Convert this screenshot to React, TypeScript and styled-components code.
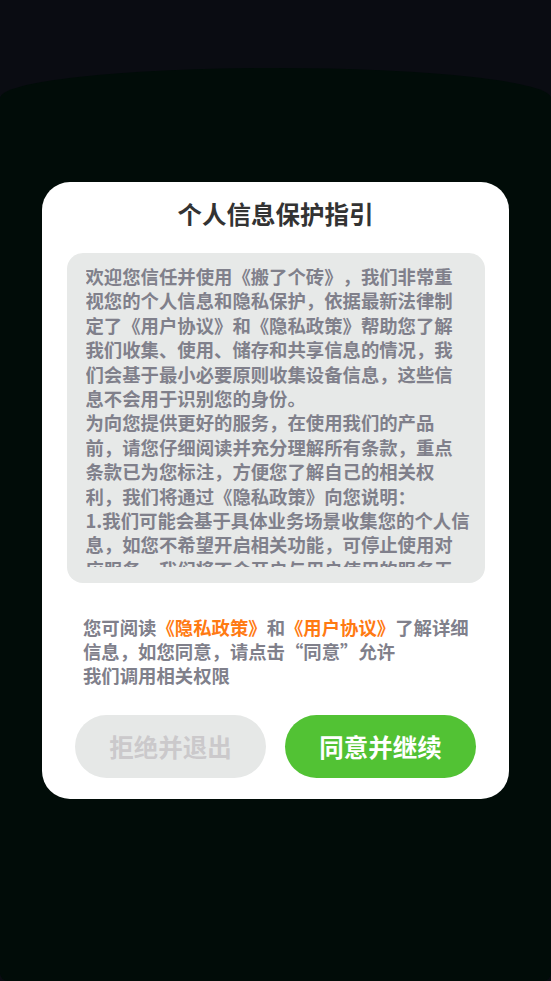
import React from 'react'
import styled, { createGlobalStyle } from 'styled-components'

const GlobalStyle = createGlobalStyle`
  html, body {
    margin: 0;
    padding: 0;
    background: #0a0c12;
  }
  body {
    font-family: 'Noto Sans CJK SC', 'Noto Sans', sans-serif;
    text-spacing-trim: space-all;
  }
  * {
    box-sizing: border-box;
  }
`

const Screen = styled.div`
  height: 100vh;
  display: flex;
  flex-direction: column;
  background: #0a0c12;
  overflow: hidden;
`

const Sheet = styled.div`
  flex: 1;
  margin-top: 68px;
  padding-top: 114px;
  background: #010c08;
  border-radius: 50% 50% 8px 8px / 30px 30px 8px 8px;
`

const Dialog = styled.div`
  width: 467px;
  margin: 0 auto;
  padding: 16px 0 21px;
  background: #ffffff;
  border-radius: 28px;
  display: flex;
  flex-direction: column;
  align-items: center;
`

const Title = styled.h2`
  margin: 0;
  font-size: 24.5px;
  line-height: 32px;
  font-weight: 700;
  color: #333333;
`

const AgreementBox = styled.div`
  width: 418px;
  margin-top: 23px;
  padding: 11px 0 16px 19px;
  background: #e7e9e8;
  border-radius: 16px;
`

const AgreementScroll = styled.div`
  width: 384px;
  height: 303px;
  overflow-y: auto;
  scrollbar-width: none;

  &::-webkit-scrollbar {
    display: none;
  }
`

const Paragraph = styled.p`
  margin: 0;
  font-size: 18.37px;
  line-height: 24.4px;
  font-weight: 700;
  color: #80808b;
`

const Notice = styled.p`
  align-self: stretch;
  margin: 32px 0 0;
  padding: 0 34px 0 41px;
  font-size: 18.37px;
  line-height: 24px;
  font-weight: 700;
  color: #80808b;
`

const Link = styled.span`
  color: #ff7a12;
`

const Actions = styled.div`
  display: flex;
  gap: 19px;
  margin-top: 28px;
`

const ActionButton = styled.button<{ $primary?: boolean }>`
  width: 191px;
  height: 63px;
  border: none;
  border-radius: 32px;
  font-family: inherit;
  font-size: 24.5px;
  font-weight: 700;
  cursor: pointer;
  background: ${({ $primary }) => ($primary ? '#52c234' : '#e6e8e7')};
  color: ${({ $primary }) => ($primary ? '#ffffff' : '#cbc9cb')};
`

const PARAGRAPHS = [
  '欢迎您信任并使用《搬了个砖》，我们非常重视您的个人信息和隐私保护，依据最新法律制定了《用户协议》和《隐私政策》帮助您了解我们收集、使用、储存和共享信息的情况，我们会基于最小必要原则收集设备信息，这些信息不会用于识别您的身份。',
  '为向您提供更好的服务，在使用我们的产品前，请您仔细阅读并充分理解所有条款，重点条款已为您标注，方便您了解自己的相关权利，我们将通过《隐私政策》向您说明：',
  '1.我们可能会基于具体业务场景收集您的个人信息，如您不希望开启相关功能，可停止使用对应服务，我们将不会开启与用户使用的服务无关的功能。',
  '2.未经您的同意，我们不会将您的个人信息共享给第三方。',
]

export default function App() {
  return (
    <>
      <GlobalStyle />
      <Screen lang='zh-CN'>
        <Sheet>
          <Dialog>
            <Title>个人信息保护指引</Title>

            <AgreementBox>
              <AgreementScroll>
                {PARAGRAPHS.map((text) => (
                  <Paragraph key={text}>{text}</Paragraph>
                ))}
              </AgreementScroll>
            </AgreementBox>

            <Notice>
              您可阅读<Link>《隐私政策》</Link>和<Link>《用户协议》</Link>了解详细信息，如您同意，请点击“同意”允许
              <br />
              我们调用相关权限
            </Notice>

            <Actions>
              <ActionButton>拒绝并退出</ActionButton>
              <ActionButton $primary>同意并继续</ActionButton>
            </Actions>
          </Dialog>
        </Sheet>
      </Screen>
    </>
  )
}
